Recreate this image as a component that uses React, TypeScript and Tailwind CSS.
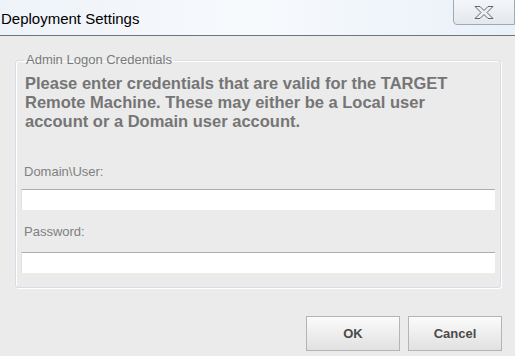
export default function App() {
  return (
    <div className="w-[515px] h-[356px] bg-[#ebebeb] flex flex-col overflow-hidden" style={{ fontFamily: '"Liberation Sans", Arial, sans-serif' }}>
      {/* Title bar */}
      <div className="h-[36px] shrink-0 flex items-start justify-between border-b border-[#6f7478] bg-gradient-to-r from-[#eef3f9] via-[#f7fafd] to-[#e9f0f8]">
        <div className="pt-[10px] pl-[1px] text-[15px] leading-[18px] text-black">
          Deployment Settings
        </div>
        <div className="w-[62px] h-[26px] -mt-px border border-[#a3a9b1] rounded-bl-[4px] bg-gradient-to-b from-[#f4f6f9] to-[#e3e8ee] flex items-center justify-center">
          <svg width="22" height="15" viewBox="0 0 22 15">
            <path d="M2 1.5 L7 1.5 L11 5.5 L15 1.5 L20 1.5 L14 7.5 L20 13.5 L15 13.5 L11 9.5 L7 13.5 L2 13.5 L8 7.5 Z" fill="#eef0f3" stroke="#5f6670" strokeWidth="1" strokeLinejoin="round" />
          </svg>
        </div>
      </div>

      {/* Body */}
      <div className="flex-1 flex flex-col px-[15px] pt-[17px]">
        <fieldset className="border border-[#d5dde6] rounded-[3px] shadow-[inset_1px_1px_0_#ffffff,1px_1px_0_#ffffff] px-[5px] pb-[14px] w-[486px] h-[235px]">
          <legend className="ml-[3px] px-[2px] text-[13px] text-[#7a7a7a] leading-[14px]">Admin Logon Credentials</legend>
          <p className="pl-[4px] pt-[7px] w-[452px] text-[16.5px] font-bold text-[#757575] leading-[19px]">
            Please enter credentials that are valid for the TARGET Remote Machine. These may either be a Local user account or a Domain user account.
          </p>
          <div className="pl-[3px] mt-[34px] text-[13px] text-[#808080] leading-[14px]">Domain\User:</div>
          <input className="mt-[10px] block w-[474px] h-[21px] bg-white border-t border-t-[#adadad] border-l border-l-[#e2e2e2] outline-none" />
          <div className="pl-[3px] mt-[15px] text-[13px] text-[#808080] leading-[14px]">Password:</div>
          <input type="password" className="mt-[13px] block w-[474px] h-[21px] bg-white border-t border-t-[#adadad] border-l border-l-[#e2e2e2] outline-none" />
        </fieldset>

        <div className="flex justify-end gap-[8px] mt-[28px] -mr-[2px]">
          <button className="w-[94px] h-[35px] border border-[#b4b4b4] bg-gradient-to-b from-[#fbfbfb] to-[#e1e1e1] text-[13px] font-bold text-[#4a4a4a]">OK</button>
          <button className="w-[94px] h-[35px] border border-[#b4b4b4] bg-gradient-to-b from-[#fbfbfb] to-[#e1e1e1] text-[13px] font-bold text-[#4a4a4a]">Cancel</button>
        </div>
      </div>
    </div>
  );
}
